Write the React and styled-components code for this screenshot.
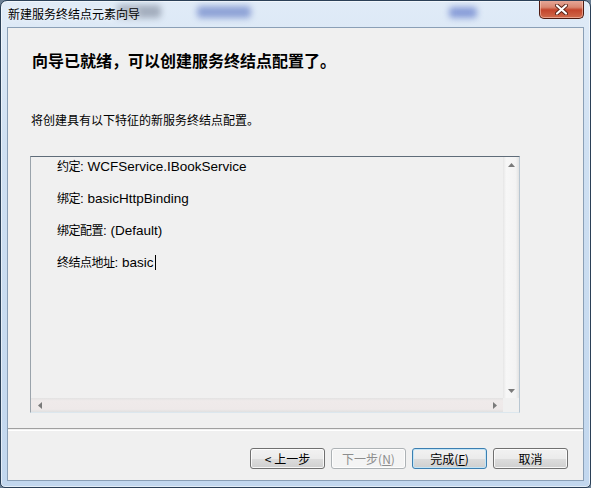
import styled, { createGlobalStyle } from "styled-components";

const GlobalStyle = createGlobalStyle`
  html, body {
    margin: 0;
    padding: 0;
    background: #6b7f94;
  }
  body {
    font-family: "Noto Sans CJK SC", sans-serif;
  }
`;

const Window = styled.div`
  position: relative;
  width: 591px;
  height: 488px;
  box-sizing: border-box;
  border: 1px solid #2b4057;
  border-radius: 7px 7px 5px 5px;
  background: linear-gradient(180deg, #e0ebf7 0%, #cfe0f2 30%, #c2d7ee 100%);
  box-shadow: inset 0 0 0 1px rgba(255, 255, 255, 0.55);
  display: flex;
  flex-direction: column;
  overflow: hidden;
`;

const TitleBar = styled.div`
  position: relative;
  height: 26px;
  padding-left: 7px;
  display: flex;
  align-items: center;
  font-size: 12px;
  color: #000;
  text-shadow: 0 0 6px rgba(255, 255, 255, 0.9);
`;

// smeared shapes from whatever sits behind the glass
const Smear = styled.span`
  position: absolute;
  top: ${(p) => p.$top}px;
  left: ${(p) => p.$left}px;
  width: ${(p) => p.$w}px;
  height: ${(p) => p.$h}px;
  border-radius: 4px;
  background: ${(p) => p.$color};
  filter: blur(3px);
`;

const TitleText = styled.span`
  position: relative;
  line-height: 16px;
`;

const CloseButton = styled.div`
  position: absolute;
  top: -1px;
  right: 6px;
  width: 45px;
  height: 19px;
  box-sizing: border-box;
  border: 1px solid #4e1a10;
  border-top: none;
  border-radius: 0 0 5px 5px;
  background: linear-gradient(180deg, #e8ab9c 0%, #d98771 40%, #c4452c 55%, #cf6a4b 100%);
  box-shadow: inset 0 0 0 1px rgba(255, 210, 195, 0.55);
  display: flex;
  align-items: center;
  justify-content: center;
`;

const Frame = styled.div`
  flex: 1;
  padding: 0 6px 6px 6px;
  display: flex;
`;

const Client = styled.div`
  flex: 1;
  border: 1px solid #8a9fb6;
  background: #f0f0f0;
  display: flex;
  flex-direction: column;
`;

const Heading = styled.h1`
  margin: 22px 0 0 0;
  padding-left: 24px;
  font-size: 16px;
  line-height: 20px;
  font-weight: 700;
  color: #000;
`;

const Subtitle = styled.p`
  margin: 42px 0 0 0;
  padding-left: 23px;
  font-size: 12px;
  line-height: 16px;
  color: #000;
`;

const TextBox = styled.div`
  margin: 28px 0 0 22px;
  width: 490px;
  height: 257px;
  box-sizing: border-box;
  border-top: 1px solid #5f6c79;
  border-left: 1px solid #9aa3ab;
  border-right: 1px solid #b8c6d1;
  border-bottom: 1px solid #dce7ee;
  display: grid;
  grid-template-columns: 1fr 16px;
  grid-template-rows: 1fr 14px;
`;

const Content = styled.div`
  padding-left: 26px;
  display: flex;
  flex-direction: column;
  gap: 12px;
  font-family: "Liberation Sans", "Noto Sans CJK SC", sans-serif;
  font-size: 13.5px;
  color: #000;
`;

const Line = styled.div`
  height: 20px;
  line-height: 20px;
  white-space: nowrap;
`;

const Label = styled.span`
  font-family: "Noto Sans CJK SC", sans-serif;
  font-size: 12px;
  line-height: 1;
  letter-spacing: -0.5px;
`;

const Caret = styled.span`
  display: inline-block;
  width: 1px;
  height: 15px;
  margin-left: 1px;
  vertical-align: -3px;
  background: #000;
`;

const ScrollTrack = styled.div`
  display: flex;
  flex-direction: ${(p) => (p.$vertical ? "column" : "row")};
  justify-content: space-between;
  align-items: center;
  padding: ${(p) => (p.$vertical ? "6px 0 5px" : "0 6px 0 7px")};
  background: ${(p) =>
    p.$vertical
      ? "linear-gradient(90deg, #e6e6e6 0%, #f7f7f7 20%, #f3f3f3 80%, #e2e2e2 100%)"
      : "linear-gradient(180deg, #e2e2e2 0%, #efeaea 20%, #eee9e9 80%, #e0e0e0 100%)"};
`;

const Corner = styled.div`
  background: #f0f0f0;
`;

const Separator = styled.div`
  margin-top: 15px;
  height: 1px;
  border-top: 1px solid #a0a0a0;
  border-bottom: 1px solid #ffffff;
`;

const Footer = styled.div`
  flex: 1;
  padding: 17px 15px 0 0;
  display: flex;
  justify-content: flex-end;
  align-items: flex-start;
  gap: 6px;
`;

const Button = styled.div`
  width: 75px;
  height: 21px;
  box-sizing: border-box;
  border: 1px solid ${(p) => (p.$disabled ? "#adb2b5" : p.$default ? "#3c7fb1" : "#707070")};
  border-radius: 3px;
  background: ${(p) =>
    p.$disabled
      ? "#f4f4f4"
      : "linear-gradient(180deg, #f2f2f2 0%, #ebebeb 50%, #dddddd 51%, #cfcfcf 100%)"};
  box-shadow: inset 0 0 0 1px ${(p) => (p.$default ? "#c4e5f6" : "rgba(255,255,255,0.8)")};
  color: ${(p) => (p.$disabled ? "#8d8d8d" : "#000")};
  font-size: 12px;
  line-height: 19px;
  text-align: center;
  u {
    text-decoration: underline;
  }
`;

function Arrow({ dir }) {
  const shapes = {
    up: "0,4 3.5,0 7,4",
    down: "0,0 7,0 3.5,4",
    left: "4,0 4,7 0,3.5",
    right: "0,0 4,3.5 0,7",
  };
  const vertical = dir === "up" || dir === "down";
  return (
    <svg width={vertical ? 7 : 4} height={vertical ? 4 : 7}>
      <polygon points={shapes[dir]} fill="#7a7a7a" />
    </svg>
  );
}

const rows = [
  ["约定", "WCFService.IBookService"],
  ["绑定", "basicHttpBinding"],
  ["绑定配置", "(Default)"],
  ["终结点地址", "basic"],
];

export default function App() {
  return (
    <>
      <GlobalStyle />
      <Window>
        <TitleBar>
          <Smear $top={4} $left={116} $w={44} $h={13} $color="rgba(90,100,120,0.45)" />
          <Smear $top={5} $left={196} $w={54} $h={12} $color="rgba(45,75,175,0.45)" />
          <Smear $top={6} $left={448} $w={28} $h={11} $color="rgba(50,80,185,0.5)" />
          <TitleText>新建服务终结点元素向导</TitleText>
          <CloseButton>
            <svg width="13" height="11" viewBox="0 0 13 11">
              <path d="M2 1.5 L11 9.5 M11 1.5 L2 9.5" stroke="#5a2418" strokeWidth="4" strokeLinecap="round" />
              <path d="M2 1.5 L11 9.5 M11 1.5 L2 9.5" stroke="#fff" strokeWidth="2.2" strokeLinecap="round" />
            </svg>
          </CloseButton>
        </TitleBar>
        <Frame>
          <Client>
            <Heading>向导已就绪，可以创建服务终结点配置了。</Heading>
            <Subtitle>将创建具有以下特征的新服务终结点配置。</Subtitle>
            <TextBox>
              <Content>
                {rows.map(([label, value], i) => (
                  <Line key={label}>
                    <Label>{label}</Label>: {value}
                    {i === rows.length - 1 && <Caret />}
                  </Line>
                ))}
              </Content>
              <ScrollTrack $vertical>
                <Arrow dir="up" />
                <Arrow dir="down" />
              </ScrollTrack>
              <ScrollTrack>
                <Arrow dir="left" />
                <Arrow dir="right" />
              </ScrollTrack>
              <Corner />
            </TextBox>
            <Separator />
            <Footer>
              <Button>&lt; 上一步</Button>
              <Button $disabled>
                下一步(<u>N</u>)
              </Button>
              <Button $default>
                完成(<u>F</u>)
              </Button>
              <Button>取消</Button>
            </Footer>
          </Client>
        </Frame>
      </Window>
    </>
  );
}
